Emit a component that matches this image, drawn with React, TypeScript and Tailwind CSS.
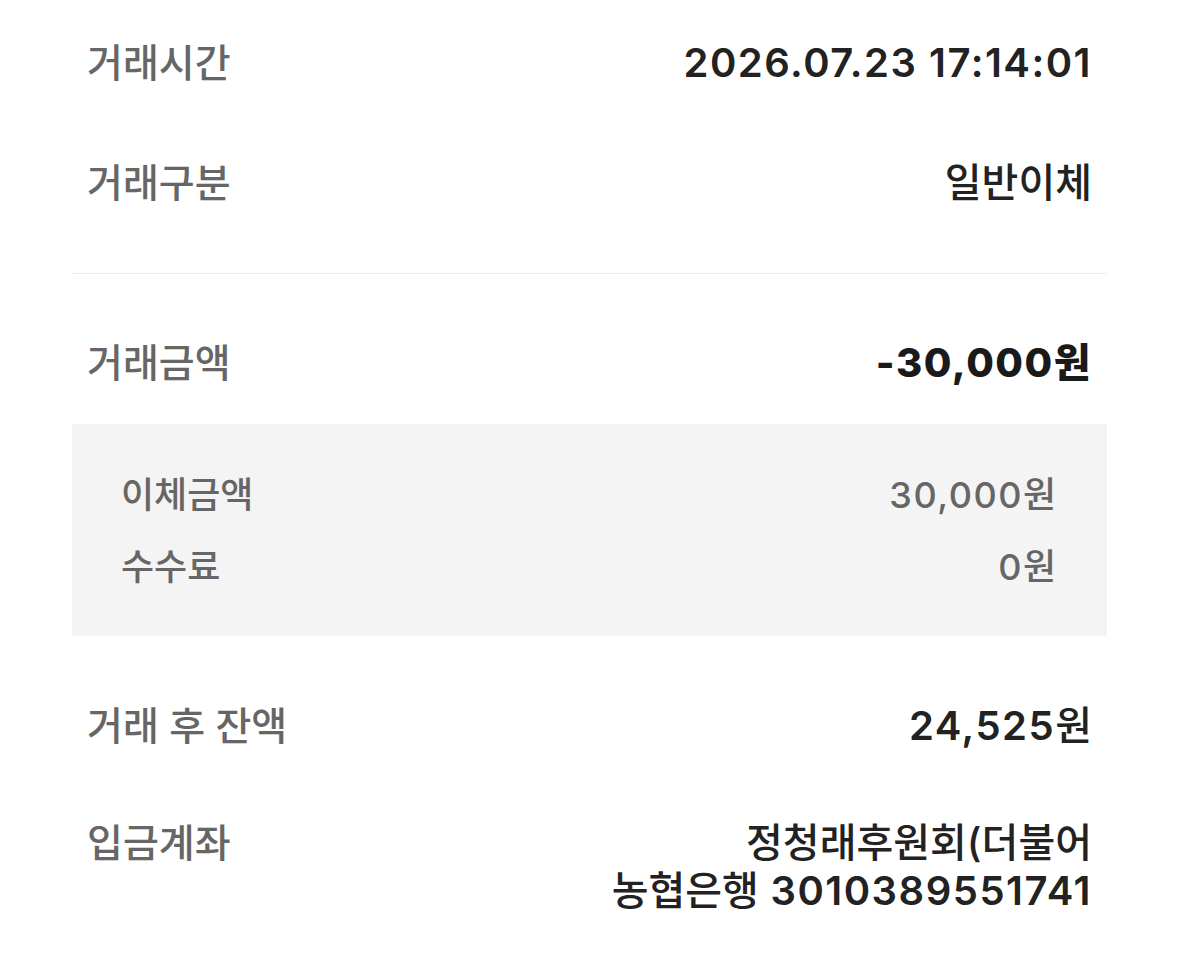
import React from 'react';

const font = { fontFamily: 'Inter, "Noto Sans CJK KR", sans-serif' };

type Row = { label: string; value: string; strong?: boolean };

const topRows: Row[] = [
  { label: '거래시간', value: '2026.07.23 17:14:01' },
  { label: '거래구분', value: '일반이체' },
];

const breakdown: Row[] = [
  { label: '이체금액', value: '30,000원' },
  { label: '수수료', value: '0원' },
];

// Hangul runs read heavier than the numerals, so they get a lighter weight and no tracking
function Mixed({ text, hangulClass }: { text: string; hangulClass: string }) {
  const parts = text.split(/([\u3131-\uD79D()]+)/).filter(Boolean);
  return (
    <>
      {parts.map((part, i) =>
        /[\u3131-\uD79D]/.test(part) ? (
          <span key={i} className={`tracking-normal ${hangulClass}`}>
            {part}
          </span>
        ) : (
          <span key={i}>{part}</span>
        )
      )}
    </>
  );
}

function DetailRow({ label, value, strong }: Row) {
  return (
    <div className="flex h-[120px] items-center justify-between px-[15px]">
      <span className="text-[39px] font-medium text-[#666666]">{label}</span>
      {strong ? (
        <span className="text-[40px] font-extrabold tracking-[1.5px] text-[#1a1a1a]">{value}</span>
      ) : (
        <span className="text-[40px] font-semibold tracking-[1.5px] text-[#222222]">
          <Mixed text={value} hangulClass="font-medium" />
        </span>
      )}
    </div>
  );
}

export default function App() {
  return (
    <div className="min-h-[964px] bg-white px-[72px] pt-[3px]" style={font}>
      {topRows.map((row) => (
        <DetailRow key={row.label} {...row} />
      ))}

      <div className="mt-[30px] h-px bg-[#ececec]" />

      <div className="mt-[29px]">
        <DetailRow label="거래금액" value="-30,000원" strong />
      </div>

      <div className="mt-px bg-[#f4f4f4] pl-[49px] pr-[51px] pt-[35px] pb-[33px]">
        {breakdown.map((row) => (
          <div key={row.label} className="flex h-[72px] items-center justify-between">
            <span className="text-[36px] font-medium text-[#666666]">{row.label}</span>
            <span className="text-[36px] font-medium tracking-[1.5px] text-[#666666]">
              <Mixed text={row.value} hangulClass="" />
            </span>
          </div>
        ))}
      </div>

      <div className="mt-[30px]">
        <DetailRow label="거래 후 잔액" value="24,525원" />
      </div>

      <div className="flex justify-between px-[15px] pt-[33px]">
        <span className="text-[39px] font-medium leading-[48px] text-[#666666]">입금계좌</span>
        <div className="text-right text-[40px] font-semibold leading-[48px] tracking-[1.5px] text-[#222222]">
          <div>
            <Mixed text="정청래후원회(더불어" hangulClass="font-medium" />
          </div>
          <div>
            <Mixed text="농협은행 3010389551741" hangulClass="font-medium" />
          </div>
        </div>
      </div>
    </div>
  );
}
